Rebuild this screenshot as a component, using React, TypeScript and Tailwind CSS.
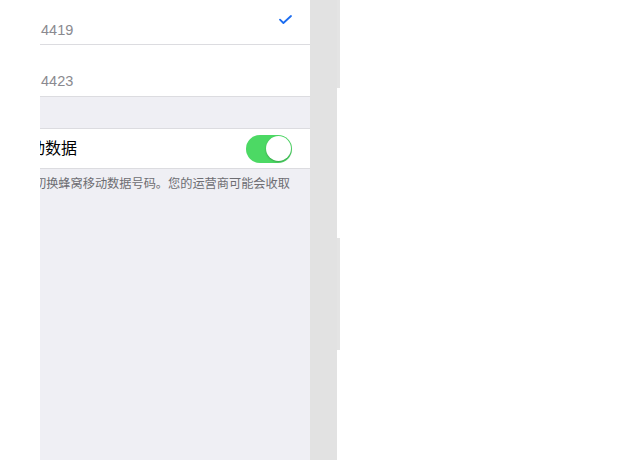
import React from "react";

const cjk = { fontFamily: '"Noto Sans CJK SC", "Noto Sans", sans-serif' };
const latin = { fontFamily: '"Liberation Sans", Arial, sans-serif' };

function Check() {
  return (
    <svg width="13" height="9" viewBox="0 0 13 9" fill="none">
      <path d="M1 4.6 L4.4 8 L12 1" stroke="#1b6cf0" strokeWidth="1.8" strokeLinecap="round" strokeLinejoin="round" />
    </svg>
  );
}

function Toggle() {
  return (
    <div className="w-[46px] h-[28px] rounded-full bg-[#4cd964] flex items-center justify-end pr-[1.5px]">
      <div className="w-[25px] h-[25px] rounded-full bg-white shadow-[0_1px_2px_rgba(0,0,0,0.25)]" />
    </div>
  );
}

export default function App() {
  return (
    <div className="w-[640px] h-[460px] flex bg-white overflow-hidden">
      <div className="w-[40px] shrink-0" />

      {/* screen */}
      <div className="w-[270px] shrink-0 h-full bg-[#efeff4] overflow-hidden flex flex-col">
        <div className="h-[45px] bg-white border-b border-[#dcdce0] flex items-end justify-between pb-[7px] pr-[18px]">
          <span className="text-[14.5px] text-[#8a8a8f] ml-[1px] leading-none" style={latin}>4419</span>
          <div className="self-start mt-[15px]">
            <Check />
          </div>
        </div>
        <div className="h-[52px] bg-white border-b border-[#dcdce0] flex items-end pb-[8px]">
          <span className="text-[14.5px] text-[#8a8a8f] ml-[1px] leading-none" style={latin}>4423</span>
        </div>

        <div className="h-[32px] border-b border-[#dcdce0]" />

        <div className="h-[40px] bg-white border-b border-[#dcdce0] flex items-center justify-between pr-[18px]">
          <span className="text-[16px] text-black ml-[-11px] mb-[3px] leading-none" style={cjk}>动数据</span>
          <Toggle />
        </div>

        <div className="pt-[8px] whitespace-nowrap">
          <span className="block text-[12.2px] text-[#6d6d72] ml-[-6px] leading-none" style={cjk}>
            切换蜂窝移动数据号码。您的运营商可能会收取
          </span>
        </div>
      </div>

      {/* phone frame */}
      <div className="w-[27px] shrink-0 h-full bg-[#e2e2e2]" />
      <div className="w-[3px] shrink-0 h-full flex flex-col">
        <div className="h-[88px] bg-[#e4e4e4]" />
        <div className="h-[150px]" />
        <div className="h-[112px] bg-[#e4e4e4]" />
      </div>
    </div>
  );
}
